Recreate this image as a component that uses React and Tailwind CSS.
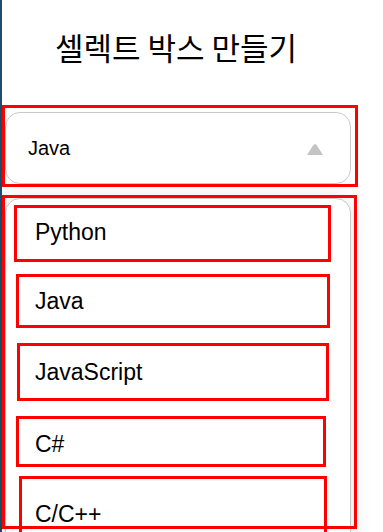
const options = [
  { label: "Python", box: "ml-[8px] mt-[6px] w-[317px] h-[57px] pt-[11px] pl-[18px]" },
  { label: "Java", box: "ml-[10px] mt-[12px] w-[314px] h-[54px] pt-[11px] pl-[16px]" },
  { label: "JavaScript", box: "ml-[11px] mt-[15px] w-[312px] h-[58px] pt-[13px] pl-[15px]" },
  { label: "C#", box: "ml-[10px] mt-[15px] w-[310px] h-[51px] pt-[12px] pl-[16px]" },
  { label: "C/C++", box: "ml-[13px] mt-[9px] w-[308px] h-[70px] pt-[22px] pl-[13px]" },
];

const SelectBox = ({ selected }) => {
  return (
    <div className="w-[356px] h-[82px] border-[3px] border-[#ff0000] pt-[4px]">
      <div className="w-[346px] h-[72px] rounded-[15px] border border-[#c8c8c8] bg-white flex items-center pl-[22px] pr-[27px]">
        <span className="text-[20px] leading-[24px] text-black">{selected}</span>
        <svg className="ml-auto mt-[2px]" width="16" height="12" viewBox="0 0 16 12">
          <path d="M8 1 Q9 1 10 2.5 L16 12 L0 12 L6 2.5 Q7 1 8 1 Z" fill="#c4c4c4" />
        </svg>
      </div>
    </div>
  );
};

const OptionList = () => {
  return (
    <div className="relative w-[355px] h-[334px] mt-[8px]">
      <div className="ml-[3px] mt-[3px] w-[346px] h-[360px] rounded-t-[15px] border border-[#c8c8c8] bg-white shadow-[0_0_22px_rgba(0,0,0,0.12)] flex flex-col">
        {options.map((opt) => (
          <div
            key={opt.label}
            className={`${opt.box} shrink-0 border-[3px] border-[#ff0000] text-[23px] leading-[26px] text-black`}
          >
            {opt.label}
          </div>
        ))}
      </div>
      <div className="absolute inset-0 border-[3px] border-[#ff0000] pointer-events-none" />
    </div>
  );
};

export default function App() {
  return (
    <div className="w-[383px] h-[532px] overflow-hidden bg-white flex font-['Liberation_Sans',Arial,sans-serif]">
      <div className="w-[2px] shrink-0 bg-[#1d4d6b]" />
      <div className="flex flex-col">
        <h1 className="mt-[26px] mb-[38px] pl-[53px] text-[31px] leading-[41px] font-normal text-black font-['Noto_Sans_CJK_KR',sans-serif]">
          셀렉트 박스 만들기
        </h1>
        <SelectBox selected="Java" />
        <OptionList />
      </div>
    </div>
  );
}
